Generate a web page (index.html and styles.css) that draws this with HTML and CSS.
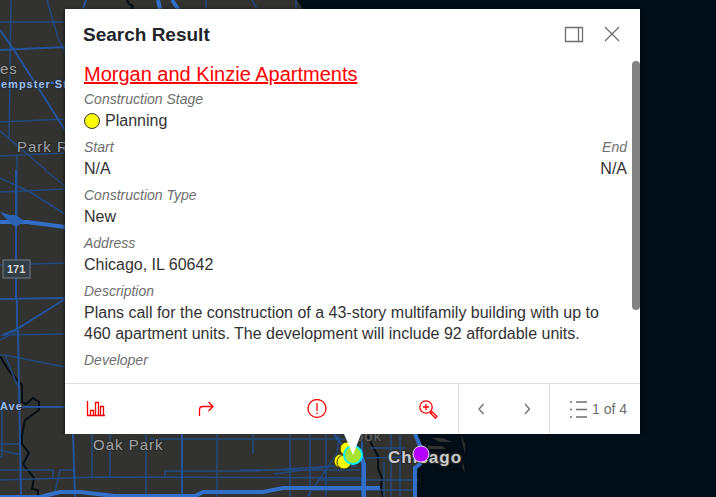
FILE: index.html
```html
<!DOCTYPE html>
<html lang="en">
<head>
    <meta charset="UTF-8">
    <meta name="viewport" content="width=device-width, initial-scale=1.0">
    <title>Search Result</title>
    <link rel="stylesheet" href="styles.css">
</head>
<body>
    <!-- base map -->
    <svg class="map" viewBox="0 0 716 497" preserveAspectRatio="xMinYMin slice">
        <path class="land" d="M0 0H297L303 9L380 434H417L422 446L425 458L417 467L415 497H0Z"/>
        <path class="land" d="M432 438h10l10 4h-12zM428 446h14l4 3h-18zM461 435l4 9v10l-2-8zM463 462l2 11-3-6z"/>
        <g class="river">
            <path d="M127 0l2 4 4 2-2 3M0 356l9 15 13 14v17l4 2 7-6 6 4v8l-14 10-3 14v10l7 9-6 11 11 14-2 11 6 1v8"/>
            <path d="M366 434l12 22v12l4 10-1 10 2 9"/>
        </g>
        <g class="street">
            <path d="M11 0L9 138M47 0l11 38 7 14M0 22h65M0 122l65-3M0 131l46 39M0 156l65-3M17 156v14M45 170l20 16"/>
            <path d="M0 178l30 14 35 22M0 192l65-3M17 170v52M0 265l65-2M0 335l65-1M0 355h5l60 12M20 330l-20 10M5 355l13 32"/>
            <path d="M2 400v57H0M0 444h20M0 450l21 5M0 470h53v8M0 480l100-3 263 1M55 492l5-22h14"/>
            <path d="M92 434v43M110 434v43M146 434v63M217 434v63M253 434v20M290 434v63M310 434v63M326 434v63"/>
            <path d="M150 439h195M165 477v-6h90l80-5h22M230 439h115M240 470h120M318 480h100M310 490h105M370 448h35M384 462v35M400 434v63M391 434v63"/>
            <path d="M339 434l-2 20-30 43M206 0v9M252 0l5 9M296 0v9M334 466l-60 8M366 458l52-1"/>
        </g>
        <g class="road">
            <path d="M0 50l65-3M0 30l14 20 51 80M16 170v130M0 299l65-1M65 299L17 329 3 335M17 300v30M18 330l3 167M21 407h44M73 434l2 63M182 434v63"/>
            <path d="M86 0l-3 9M362 434v63M334 434l10 14"/>
        </g>
        <g class="highway">
            <path d="M0 222h27l38 5M158 0l2 9M172 0l6 9M0 497h40l20-5h20l35 4h80l8-4h60l20-4h97M360 452l4 12v33M415 434l6 14-1 16-5 4v29"/>
        </g>
        <path class="hub" d="M0 212l10 3 6 0 8 6-8 6-6-4z"/>
        <path class="hub" d="M49 84l3-3 3 3z"/>
        <g class="place">
            <text x="0" y="74">es</text>
            <text x="17" y="152">Park R</text>
            <text x="93" y="450">Oak Park</text>
        </g>
        <text class="place faint" x="355" y="441">ook</text>
        <text class="place city" x="388" y="463">Chicago</text>
        <g class="route">
            <text x="1" y="88">empster St</text>
            <text x="0" y="410">Ave</text>
        </g>
        <rect class="shield" x="3" y="260" width="27" height="18"/>
        <text class="shield-text" x="7" y="273">171</text>
        <!-- search hits -->
        <g class="hit">
            <circle cx="347" cy="449" r="7"/>
            <circle cx="341" cy="461" r="7"/>
            <circle cx="344" cy="462" r="7"/>
        </g>
        <circle class="hit-active" cx="353" cy="455" r="9"/>
        <circle class="hit-other" cx="421" cy="454" r="8"/>
        <!-- popup pointer -->
        <path class="pointer" d="M344 430h17v4l-8 21-9-21z"/>
    </svg>

    <main class="popup">
        <header class="popup-header">
            <h1 class="popup-title">Search Result</h1>
            <button type="button" class="icon-btn" aria-label="Dock">
                <svg width="20" height="20" viewBox="0 0 20 20"><path d="M1.500 2.500h17v14h-17zM14.500 2.500v14"/></svg>
            </button>
            <button type="button" class="icon-btn" aria-label="Close">
                <svg width="20" height="20" viewBox="0 0 20 20"><path d="M3 2l14 14M17 2L3 16"/></svg>
            </button>
        </header>

        <div class="popup-content">
            <a class="project" href="#">Morgan and Kinzie Apartments</a>
            <dl class="fields">
                <div class="field">
                    <dt>Construction Stage</dt>
                    <dd class="stage"><span class="dot"></span>Planning</dd>
                </div>
                <div class="dates">
                    <div class="field">
                        <dt>Start</dt>
                        <dd>N/A</dd>
                    </div>
                    <div class="field end">
                        <dt>End</dt>
                        <dd>N/A</dd>
                    </div>
                </div>
                <div class="field">
                    <dt>Construction Type</dt>
                    <dd>New</dd>
                </div>
                <div class="field">
                    <dt>Address</dt>
                    <dd>Chicago, IL 60642</dd>
                </div>
                <div class="field">
                    <dt>Description</dt>
                    <dd>Plans call for the construction of a 43-story multifamily building with up to 460 apartment units. The development will include 92 affordable units.</dd>
                </div>
                <div class="field">
                    <dt>Developer</dt>
                </div>
            </dl>
            <div class="scroll-thumb"></div>
        </div>

        <footer class="popup-footer">
            <div class="actions">
                <button type="button" class="action" aria-label="Statistics">
                    <svg width="20" height="20" viewBox="0 0 20 20"><path d="M2.500 2v14.500H20M5.500 16.500v-5h3v5M10.500 16.500v-13h3v13M15.500 16.500v-9h3v9"/></svg>
                </button>
                <button type="button" class="action" aria-label="Directions">
                    <svg width="20" height="20" viewBox="0 0 20 20"><path d="M3.500 17v-6q0-3.500 3.500-3.500h9.500M12.500 3l4.500 4.500-4.500 4.500"/></svg>
                </button>
                <button type="button" class="action" aria-label="Report">
                    <svg width="20" height="20" viewBox="0 0 20 20"><circle cx="10" cy="9.500" r="9"/><path d="M10 4v8M10 13.500v1.500"/></svg>
                </button>
                <button type="button" class="action" aria-label="Zoom to">
                    <svg width="20" height="20" viewBox="0 0 20 20"><circle cx="8" cy="8" r="6.200"/><path d="M8 5v6M5 8h6M12.500 12.500l1.500 1.500M14 12.800l5 4.700-1.500 1.500-5-4.700z"/></svg>
                </button>
            </div>
            <div class="pager">
                <button type="button" class="page-btn" aria-label="Previous">
                    <svg width="16" height="16" viewBox="0 0 16 16"><path d="M10.500 3L6 8l4.500 5"/></svg>
                </button>
                <button type="button" class="page-btn" aria-label="Next">
                    <svg width="16" height="16" viewBox="0 0 16 16"><path d="M6 3l4.500 5L6 13"/></svg>
                </button>
            </div>
            <button type="button" class="list-btn">
                <svg width="20" height="20" viewBox="0 0 20 20"><path d="M8 3h11M8 10.500h11M8 18h11M2 3h2M2 10.500h2M2 18h2"/></svg>
                1 of 4
            </button>
        </footer>
    </main>
</body>
</html>
```
FILE: styles.css
```css
body
{
    margin: 0;
    background-color: #010e18;
    color: #323232;
    font-family: "Liberation Sans", Arial, sans-serif;
    font-size: 16px;
    line-height: 21px;
}

/* map */
.map
{
    position: absolute;
    top: 0;
    left: 0;
    width: 100%;
    height: 100%;
}
.land { fill: #323230; }
.river, .street, .road, .highway { fill: none; }
.river { stroke: #030d15; stroke-width: 2; }
.street { stroke: #22497f; stroke-width: 1.5; }
.road { stroke: #25539b; stroke-width: 2; }
.highway { stroke: #326fc8; stroke-width: 4; }
.hub { fill: #2b62b4; }
.place
{
    fill: #a0a3a5;
    stroke: #2a2a29;
    stroke-width: 2px;
    paint-order: stroke;
    font-size: 15px;
    letter-spacing: 1px;
}
.faint { fill: #62666a; }
.city
{
    fill: #c8cacb;
    font-size: 17px;
    font-weight: bold;
}
.route
{
    fill: #9dbde6;
    stroke: #26303c;
    stroke-width: 2px;
    paint-order: stroke;
    font-size: 11px;
    font-weight: bold;
    letter-spacing: 1px;
}
.shield { fill: #343d43; stroke: #71808a; }
.shield-text { fill: #d5d9dc; font-size: 11px; font-weight: bold; }
.hit { fill: #ffff00; stroke: #333300; }
.hit-active { fill: #a6e22e; stroke: #00f0ff; stroke-width: 2; }
.hit-other { fill: #b600ff; stroke: #e6d5ee; }
.pointer { fill: #fff; }

/* popup */
.popup
{
    position: relative;
    margin: 9px 76px 0 65px;
    background-color: #fff;
    box-shadow: 0 1px 4px rgba(0, 0, 0, 0.8);
}
.popup-header
{
    display: flex;
    align-items: center;
    gap: 18px;
    padding: 15px 18px 10px;
}
.popup-title
{
    flex: 1;
    margin: 0;
    font-size: 19px;
    color: #212529;
}
button
{
    padding: 0;
    border: none;
    background: none;
    color: #6e6e6e;
    font-family: inherit;
    font-size: 14px;
    cursor: pointer;
}
button svg
{
    display: block;
    fill: none;
    stroke: currentColor;
    stroke-width: 1.3;
}
.popup-content
{
    position: relative;
    padding: 7px 13px 12px 19px;
}
.project
{
    display: block;
    margin-bottom: 3px;
    color: #ff0000;
    font-size: 20px;
    line-height: 24px;
}
.fields
{
    display: grid;
    gap: 6px;
    margin: 0;
}
.dates
{
    display: flex;
    justify-content: space-between;
}
.end { text-align: right; }
dt
{
    color: #6e6e6e;
    font-size: 14px;
    font-style: italic;
}
dd { margin: 0; }
.stage
{
    display: flex;
    align-items: center;
    gap: 5px;
}
.dot
{
    box-sizing: border-box;
    width: 16px;
    height: 16px;
    border: 1px solid #333;
    border-radius: 50%;
    background-color: #ffff00;
}
.scroll-thumb
{
    position: absolute;
    top: 6px;
    right: 0;
    width: 8px;
    height: 76%;
    border-radius: 4px;
    background-color: #828282;
}

/* footer */
.popup-footer
{
    display: flex;
    height: 50px;
    border-top: 1px solid #dee0e4;
}
.actions
{
    display: flex;
    flex: 1;
    justify-content: space-between;
    padding: 0 20px;
}
.action { color: #ff0000; }
.pager
{
    display: flex;
    gap: 2px;
    border-left: 1px solid #dee0e4;
    border-right: 1px solid #dee0e4;
}
.page-btn
{
    display: flex;
    align-items: center;
    justify-content: center;
    width: 44px;
}
.list-btn
{
    display: flex;
    align-items: center;
    gap: 4px;
    padding: 0 13px 0 18px;
}
```
